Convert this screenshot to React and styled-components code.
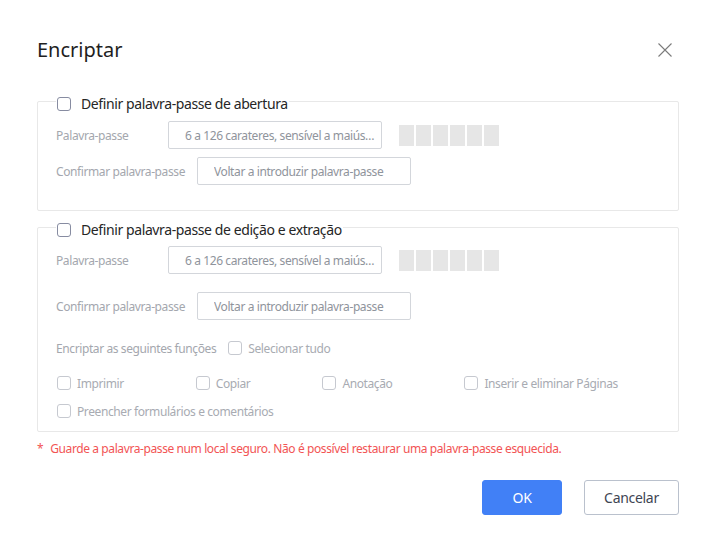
import React from "react";
import styled, { createGlobalStyle } from "styled-components";

const Global = createGlobalStyle`
  html, body { margin: 0; padding: 0; background: #ffffff; }
  body { font-family: "Noto Sans", "Open Sans", Arial, sans-serif; }
  * { box-sizing: border-box; }
`;

const Dialog = styled.div`
  width: 715px;
  height: 557px;
  padding: 30px 36px 0 37px;
  background: #fff;
  display: flex;
  flex-direction: column;
  letter-spacing: -0.4px;
`;

const Header = styled.div`
  height: 40px;
  display: flex;
  align-items: center;
  justify-content: space-between;
`;

const Title = styled.h1`
  margin: 0;
  font-size: 20px;
  font-weight: 400;
  color: #1f1f1f;
  line-height: 40px;
  letter-spacing: 0;
`;

const CloseButton = styled.button`
  width: 30px;
  height: 30px;
  margin-right: -1px;
  padding: 0;
  border: none;
  background: transparent;
  display: flex;
  align-items: center;
  justify-content: center;
  cursor: pointer;
`;

const Panel = styled.div`
  margin-top: ${(p) => p.$top}px;
  border: 1px solid #e8e8e8;
  border-radius: 2px;
  padding: 0 18px ${(p) => p.$bottom}px 18px;
  display: flex;
  flex-direction: column;
`;

const Legend = styled.label`
  align-self: flex-start;
  margin-top: -8px;
  height: 20px;
  padding: 0 1px;
  background: #fff;
  display: flex;
  align-items: center;
  gap: 10px;
  font-size: 14px;
  color: #262626;
  line-height: 20px;
`;

const Box = styled.span`
  width: 14px;
  height: 14px;
  flex: none;
  border: 1px solid ${(p) => (p.$active ? "#878ca1" : "#c6c9d0")};
  border-radius: 3px;
  background: #fff;
`;

const Row = styled.div`
  display: flex;
  align-items: center;
  height: ${(p) => p.$h || 28}px;
  margin-top: ${(p) => p.$gap}px;
`;

const FieldLabel = styled.span`
  min-width: ${(p) => (p.$free ? 0 : 100)}px;
  margin-right: 12px;
  font-size: 12px;
  color: #a4a7ae;
  white-space: nowrap;
`;

const Input = styled.input`
  width: 214px;
  height: 28px;
  border: 1px solid #d3d6db;
  border-radius: 2px;
  padding: 0 6px 0 16px;
  font-family: inherit;
  font-size: 12px;
  letter-spacing: -0.4px;
  color: #333;
  background: #fff;
  text-overflow: ellipsis;
  outline: none;
  &::placeholder { color: #8f949c; }
  &:disabled { background: #fff; }
`;

const Strength = styled.div`
  display: flex;
  gap: 2px;
  margin-left: 17px;
`;

const Bar = styled.span`
  width: 15px;
  height: 21px;
  background: #e6e6e6;
`;

const Check = styled.label`
  display: flex;
  align-items: center;
  gap: 6px;
  font-size: 12px;
  color: #a8abb2;
  white-space: nowrap;
  margin-right: ${(p) => p.$mr || 0}px;
`;

const PermGrid = styled.div`
  display: flex;
  flex-direction: column;
  gap: 8px;
  margin-top: 15px;
`;

const PermRow = styled.div`
  display: flex;
  align-items: center;
  height: 20px;
  padding-left: 1px;
`;

const Warning = styled.p`
  margin: 8px 0 0;
  font-size: 12px;
  line-height: 18px;
  color: #f25454;
  display: flex;
  gap: 7px;
`;

const Footer = styled.div`
  display: flex;
  justify-content: flex-end;
  gap: 22px;
  margin-top: 22px;
`;

const Button = styled.button`
  height: 35px;
  width: ${(p) => p.$w}px;
  border-radius: 3px;
  font-family: inherit;
  font-size: 14px;
  letter-spacing: -0.3px;
  cursor: pointer;
  border: 1px solid ${(p) => (p.$primary ? "#4180f6" : "#bac1cd")};
  background: ${(p) => (p.$primary ? "#4180f6" : "#fff")};
  color: ${(p) => (p.$primary ? "#fff" : "#3e4553")};
`;

const StrengthMeter = () => (
  <Strength>
    {Array.from({ length: 6 }).map((_, i) => (
      <Bar key={i} />
    ))}
  </Strength>
);

const perms = [
  ["Imprimir", "Copiar", "Anotação", "Inserir e eliminar Páginas"],
  ["Preencher formulários e comentários"],
];

export default function App() {
  return (
    <>
      <Global />
      <Dialog>
        <Header>
          <Title>Encriptar</Title>
          <CloseButton aria-label="Fechar">
            <svg width="14" height="14" viewBox="0 0 14 14">
              <path d="M0.5 0.5 L13.5 13.5 M13.5 0.5 L0.5 13.5" stroke="#7b7b7b" strokeWidth="1.1" fill="none" />
            </svg>
          </CloseButton>
        </Header>

        <Panel $top={31} $bottom={25}>
          <Legend>
            <Box $active />
            Definir palavra-passe de abertura
          </Legend>
          <Row $gap={7}>
            <FieldLabel>Palavra-passe</FieldLabel>
            <Input disabled placeholder="6 a 126 carateres, sensível a maiúsculas e minúsculas" />
            <StrengthMeter />
          </Row>
          <Row $gap={8}>
            <FieldLabel>Confirmar palavra-passe</FieldLabel>
            <Input disabled placeholder="Voltar a introduzir palavra-passe" />
          </Row>
        </Panel>

        <Panel $top={16} $bottom={10}>
          <Legend>
            <Box $active />
            Definir palavra-passe de edição e extração
          </Legend>
          <Row $gap={6}>
            <FieldLabel>Palavra-passe</FieldLabel>
            <Input disabled placeholder="6 a 126 carateres, sensível a maiúsculas e minúsculas" />
            <StrengthMeter />
          </Row>
          <Row $gap={18}>
            <FieldLabel>Confirmar palavra-passe</FieldLabel>
            <Input disabled placeholder="Voltar a introduzir palavra-passe" />
          </Row>
          <Row $gap={18} $h={20}>
            <FieldLabel $free>Encriptar as seguintes funções</FieldLabel>
            <Check>
              <Box />
              Selecionar tudo
            </Check>
          </Row>
          <PermGrid>
            {perms.map((row, r) => (
              <PermRow key={r}>
                {row.map((p) => (
                  <Check key={p} $mr={72}>
                    <Box />
                    {p}
                  </Check>
                ))}
              </PermRow>
            ))}
          </PermGrid>
        </Panel>

        <Warning>
          <span>*</span>
          <span>Guarde a palavra-passe num local seguro. Não é possível restaurar uma palavra-passe esquecida.</span>
        </Warning>

        <Footer>
          <Button $primary $w={80}>OK</Button>
          <Button $w={95}>Cancelar</Button>
        </Footer>
      </Dialog>
    </>
  );
}
